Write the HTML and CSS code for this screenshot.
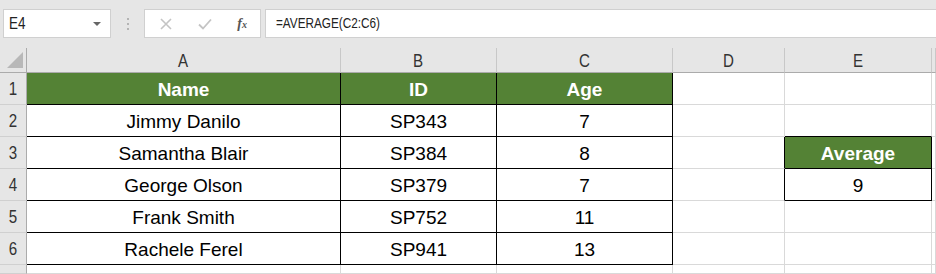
FILE: index.html
```html
<!DOCTYPE html>
<html>
<head>
  <meta charset="UTF-8">
  <title>AVERAGE</title>
  <link rel="stylesheet" href="styles.css">
</head>
<body>
  <div class="toolbar">
    <div class="namebox">
      <span class="narrow">E4</span>
      <span class="caret"></span>
    </div>
    <div class="grip"><i></i><i></i><i></i></div>
    <div class="fnbox">
      <svg class="ic" width="14" height="14" viewBox="0 0 14 14"><path d="M2 2 L12 12 M12 2 L2 12" stroke="#c4c4c4" stroke-width="1.6" fill="none"/></svg>
      <svg class="ic" width="16" height="14" viewBox="0 0 16 14"><path d="M2 7.5 L6 11.5 L14 2.5" stroke="#c4c4c4" stroke-width="1.8" fill="none"/></svg>
      <span class="fx">f<small>x</small></span>
    </div>
    <div class="formula"><span class="narrow">=AVERAGE(C2:C6)</span></div>
  </div>

  <div class="sheet">
    <!-- column headers -->
    <div class="corner"><span class="tri"></span></div>
    <div class="colhead"><span class="narrow">A</span></div>
    <div class="colhead"><span class="narrow">B</span></div>
    <div class="colhead"><span class="narrow">C</span></div>
    <div class="colhead"><span class="narrow">D</span></div>
    <div class="colhead"><span class="narrow">E</span></div>
    <div class="colhead last"></div>

    <!-- row 1 -->
    <div class="rowhead"><span class="narrow">1</span></div>
    <div class="cell t head">Name</div>
    <div class="cell t head">ID</div>
    <div class="cell t head">Age</div>
    <div class="cell"></div>
    <div class="cell"></div>
    <div class="cell"></div>

    <!-- row 2 -->
    <div class="rowhead"><span class="narrow">2</span></div>
    <div class="cell t">Jimmy Danilo</div>
    <div class="cell t">SP343</div>
    <div class="cell t">7</div>
    <div class="cell"></div>
    <div class="cell bb"></div>
    <div class="cell"></div>

    <!-- row 3 -->
    <div class="rowhead"><span class="narrow">3</span></div>
    <div class="cell t">Samantha Blair</div>
    <div class="cell t">SP384</div>
    <div class="cell t">8</div>
    <div class="cell br"></div>
    <div class="cell t head">Average</div>
    <div class="cell"></div>

    <!-- row 4 -->
    <div class="rowhead"><span class="narrow">4</span></div>
    <div class="cell t">George Olson</div>
    <div class="cell t">SP379</div>
    <div class="cell t">7</div>
    <div class="cell br"></div>
    <div class="cell t">9</div>
    <div class="cell"></div>

    <!-- row 5 -->
    <div class="rowhead"><span class="narrow">5</span></div>
    <div class="cell t">Frank Smith</div>
    <div class="cell t">SP752</div>
    <div class="cell t">11</div>
    <div class="cell"></div>
    <div class="cell"></div>
    <div class="cell"></div>

    <!-- row 6 -->
    <div class="rowhead"><span class="narrow">6</span></div>
    <div class="cell t">Rachele Ferel</div>
    <div class="cell t">SP941</div>
    <div class="cell t">13</div>
    <div class="cell"></div>
    <div class="cell"></div>
    <div class="cell"></div>

    <!-- row 7 (cut by the window) -->
    <div class="rowhead"></div>
    <div class="cell"></div>
    <div class="cell"></div>
    <div class="cell"></div>
    <div class="cell"></div>
    <div class="cell"></div>
    <div class="cell"></div>
  </div>
</body>
</html>
```

FILE: styles.css
```css
html, body {
  margin: 0;
  padding: 0;
  overflow: hidden;
}
body {
  width: 936px;
  height: 274px;
  background: #e6e6e6;
  font-family: 'Liberation Sans', Arial, sans-serif;
  color: #000;
}
.narrow {
  display: inline-block;
  transform: scaleX(0.84);
}
.toolbar {
  display: flex;
  align-items: flex-start;
  height: 48px;
  padding-top: 9px;
  box-sizing: border-box;
}
.namebox {
  display: flex;
  align-items: center;
  justify-content: space-between;
  width: 108px;
  height: 29px;
  margin-left: 3px;
  padding: 0 9px 0 5px;
  box-sizing: border-box;
  background: #fff;
  border: 1px solid #d0d0d0;
  font-size: 16px;
  color: #222;
}
.namebox .narrow {
  transform-origin: left center;
}
.caret {
  width: 0;
  height: 0;
  border-left: 4px solid transparent;
  border-right: 4px solid transparent;
  border-top: 4px solid #666;
}
.grip {
  display: flex;
  flex-direction: column;
  align-items: center;
  gap: 3px;
  width: 33px;
  padding-top: 9px;
}
.grip i {
  width: 2px;
  height: 2px;
  background: #b4b4b4;
}
.fnbox {
  display: flex;
  align-items: center;
  justify-content: space-between;
  width: 117px;
  height: 29px;
  padding: 0 13px 0 14px;
  box-sizing: border-box;
  background: #fff;
  border: 1px solid #d0d0d0;
}
.fx {
  font-family: 'Liberation Serif', serif;
  font-style: italic;
  font-weight: bold;
  font-size: 14px;
  color: #555;
}
.fx small {
  font-size: 10px;
}
.formula {
  flex: 1;
  height: 29px;
  margin-left: 4px;
  padding-left: 10px;
  box-sizing: border-box;
  background: #fff;
  border: 1px solid #d0d0d0;
  border-right: none;
  line-height: 27px;
  font-size: 14px;
  color: #222;
}
.formula .narrow {
  transform-origin: left center;
}
.sheet {
  display: grid;
  grid-template-columns: 27px 314px 156px 176px 112px 147px 1fr;
  grid-template-rows: 25px repeat(6, 32px) 9px;
  background: #fff;
}
.sheet > div {
  box-sizing: border-box;
  display: flex;
  align-items: center;
  justify-content: center;
}
.corner {
  position: relative;
  background: #e6e6e6;
  border-right: 1px solid #ababab;
  border-bottom: 1px solid #ababab;
}
.tri {
  position: absolute;
  right: 3px;
  bottom: 4px;
  width: 16px;
  height: 16px;
  background: #b8b8b8;
  clip-path: polygon(100% 0, 100% 100%, 0 100%);
}
.colhead {
  background: #e6e6e6;
  border-right: 1px solid #c8c8c8;
  border-bottom: 1px solid #ababab;
  font-size: 18px;
  color: #333;
  padding-top: 2px;
}
.rowhead {
  background: #e6e6e6;
  border-right: 1px solid #ababab;
  border-bottom: 1px solid #d0d0d0;
  font-size: 18px;
  color: #333;
  padding-top: 2px;
}
.cell {
  border-right: 1px solid #d9d9d9;
  border-bottom: 1px solid #d9d9d9;
  font-size: 19px;
  padding-top: 3px;
}
.cell.t {
  border-right-color: #000;
  border-bottom-color: #000;
}
.cell.head {
  background: #548235;
  color: #fff;
  font-weight: bold;
}
.cell.bb {
  border-bottom-color: #000;
}
.cell.br {
  border-right-color: #000;
}
```
